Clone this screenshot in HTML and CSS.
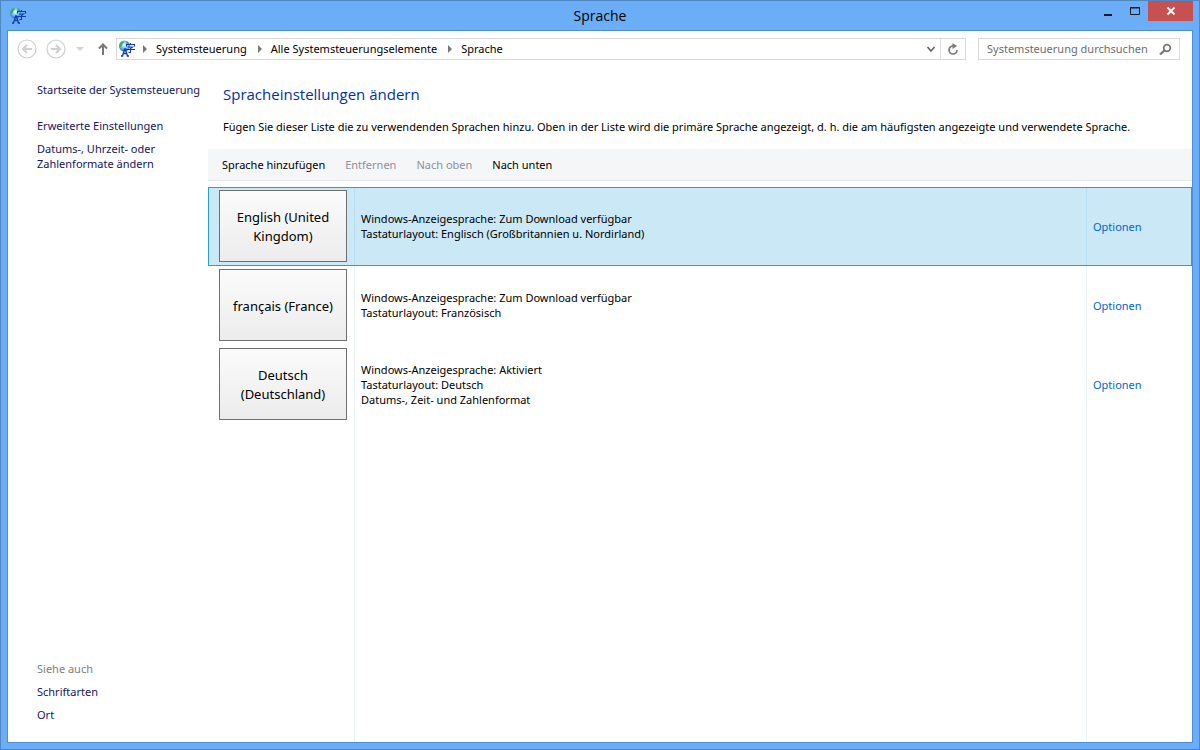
FILE: index.html
```
<!DOCTYPE html>
<html lang="de">
<head>
<meta charset="utf-8">
<title>Sprache</title>
<link rel="stylesheet" href="styles.css">
</head>
<body>
<svg class="defs" aria-hidden="true">
  <defs>
    <radialGradient id="globe" cx="0.5" cy="0.4" r="0.65">
      <stop offset="0" stop-color="#f2fdff"/>
      <stop offset="0.5" stop-color="#6cc6f0"/>
      <stop offset="1" stop-color="#1d5fc0"/>
    </radialGradient>
    <symbol id="lang" viewBox="0 0 18 18">
      <circle cx="6.500" cy="6" r="5.500" fill="url(#globe)"/>
      <path d="M1.500 4.500 3.500 1.800 5.500 1l.5 1.600-1.500 1-.8 2.400-1.700 1zM8.500 1l2.200 1.500.8 2-1.800.5-1.500-1.500z" fill="#3fae45"/>
      <path d="M4.500 16 6.700 9h.6L9.500 16M5.300 13.500h3.400M3 16h2.200M8.700 16h2.300" fill="none" stroke="#153ca8" stroke-width="1.300"/>
      <path d="M12.500 3v1.500M8.500 6.500V4.500h8v2M10 7h4.500l-2 1.500v4h-2M8 9.500h9" fill="none" stroke="#1738b5" stroke-width="1.100"/>
    </symbol>
  </defs>
</svg>
<div class="window">
  <header class="titlebar">
    <svg class="app-icon"><use href="#lang"/></svg>
    <h1 class="title">Sprache</h1>
    <div class="controls">
      <button class="control" aria-label="Minimieren"><svg width="12" height="12"><path d="M2 9h8v2H2z" fill="#1c1c1c"/></svg></button>
      <button class="control" aria-label="Maximieren"><svg width="12" height="12"><path d="M1.500 2.500h9v7h-9zM1 3h10" fill="none" stroke="#1c1c1c"/></svg></button>
      <button class="control close" aria-label="Schließen"><svg width="10" height="10"><path d="M1.500 1.500 8.500 8.500M8.500 1.500 1.500 8.500" stroke="#fff" stroke-width="1.800"/></svg></button>
    </div>
  </header>
  <div class="client">
    <nav class="navbar" aria-label="Navigation">
      <button class="nav" aria-label="Zurück" disabled><svg width="20" height="20" fill="none" stroke="#cfcfcf"><circle cx="10" cy="10" r="9" stroke-width="1.200"/><path d="M15 10H6M10 6l-4 4 4 4" stroke-width="2"/></svg></button>
      <button class="nav" aria-label="Vorwärts" disabled><svg width="20" height="20" fill="none" stroke="#cfcfcf"><circle cx="10" cy="10" r="9" stroke-width="1.200"/><path d="M5 10h9M10 6l4 4-4 4" stroke-width="2"/></svg></button>
      <button class="recent" aria-label="Verlauf" disabled><svg width="8" height="5"><path d="M0 0h8L4 4z" fill="#cfcfcf"/></svg></button>
      <button class="up" aria-label="Nach oben"><svg width="12" height="14"><path d="M6 13V3M2 6.500l4-4 4 4" fill="none" stroke="#777" stroke-width="2"/></svg></button>
      <div class="address">
        <svg class="app-icon"><use href="#lang"/></svg>
        <svg class="arrow" width="5" height="8"><path d="M0 0v8l4-4z" fill="#777"/></svg>
        <a class="crumb" href="#">Systemsteuerung</a>
        <svg class="arrow" width="5" height="8"><path d="M0 0v8l4-4z" fill="#777"/></svg>
        <a class="crumb" href="#">Alle Systemsteuerungselemente</a>
        <svg class="arrow" width="5" height="8"><path d="M0 0v8l4-4z" fill="#777"/></svg>
        <a class="crumb" href="#">Sprache</a>
        <button class="drop" aria-label="Vorherige Orte"><svg width="10" height="8"><path d="M1.500 2 5 6l3.500-4" fill="none" stroke="#666" stroke-width="1.700"/></svg></button>
        <button class="refresh" aria-label="Aktualisieren"><svg width="12" height="14"><path d="M6 4A4 4 0 1 0 10 8" fill="none" stroke="#777" stroke-width="1.700"/><path d="M5.500 1v6L10 4z" fill="#777"/></svg></button>
      </div>
      <label class="search">
        <input class="search-input" type="text" aria-label="Systemsteuerung durchsuchen" placeholder="Systemsteuerung durchsuchen">
        <svg width="13" height="13" fill="none" stroke="#777"><circle cx="8" cy="5" r="3.300" stroke-width="1.700"/><path d="M5.600 7.400 1 11.500" stroke-width="2.200"/></svg>
      </label>
    </nav>
    <div class="body">
      <aside class="sidebar">
        <a class="side-link home" href="#">Startseite der Systemsteuerung</a>
        <a class="side-link" href="#">Erweiterte Einstellungen</a>
        <a class="side-link" href="#">Datums-, Uhrzeit- oder<br>Zahlenformate ändern</a>
        <div class="see-also">
          <span class="see-title">Siehe auch</span>
          <a class="side-link" href="#">Schriftarten</a>
          <a class="side-link" href="#">Ort</a>
        </div>
      </aside>
      <main class="main">
        <h2 class="heading">Spracheinstellungen ändern</h2>
        <p class="intro">Fügen Sie dieser Liste die zu verwendenden Sprachen hinzu. Oben in der Liste wird die primäre Sprache angezeigt, d. h. die am häufigsten angezeigte und verwendete Sprache.</p>
        <div class="toolbar">
          <button class="command">Sprache hinzufügen</button>
          <button class="command" disabled>Entfernen</button>
          <button class="command" disabled>Nach oben</button>
          <button class="command">Nach unten</button>
        </div>
        <div class="list">
          <div class="row selected">
            <div class="tile-cell"><button class="tile">English (United Kingdom)</button></div>
            <div class="details">Windows-Anzeigesprache: Zum Download verfügbar<br>Tastaturlayout: Englisch (Großbritannien u. Nordirland)</div>
            <div class="action"><a class="options" href="#">Optionen</a></div>
          </div>
          <div class="row">
            <div class="tile-cell"><button class="tile">français (France)</button></div>
            <div class="details">Windows-Anzeigesprache: Zum Download verfügbar<br>Tastaturlayout: Französisch</div>
            <div class="action"><a class="options" href="#">Optionen</a></div>
          </div>
          <div class="row">
            <div class="tile-cell"><button class="tile">Deutsch (Deutschland)</button></div>
            <div class="details">Windows-Anzeigesprache: Aktiviert<br>Tastaturlayout: Deutsch<br>Datums-, Zeit- und Zahlenformat</div>
            <div class="action"><a class="options" href="#">Optionen</a></div>
          </div>
          <div class="row filler"><div></div><div class="details"></div><div class="action"></div></div>
        </div>
      </main>
    </div>
  </div>
</div>
</body>
</html>
```
FILE: styles.css
```
* { box-sizing: border-box; }
body {
  margin: 0;
  font: 11px/15px "Noto Sans", "Open Sans", sans-serif;
  color: #000;
}
button, input { font: inherit; color: inherit; }
button { border: 0; padding: 0; background: none; }
a { color: inherit; text-decoration: none; }
svg { display: block; flex: none; }
.defs { position: absolute; width: 0; height: 0; }

.window {
  display: flex;
  flex-direction: column;
  min-height: 100vh;
  padding: 0 7px 7px;
  background: #6badf6;
  border: 1px solid #4f86c4;
}
.titlebar {
  display: grid;
  grid-template-columns: 1fr auto 1fr;
  height: 29px;
}
.app-icon { width: 18px; height: 18px; }
.titlebar .app-icon { margin: 6px 1px; }
.title { margin: 0; padding-top: 5px; font-family: "Open Sans", sans-serif; font-size: 14px; line-height: 20px; font-weight: 400; }
.controls { display: flex; justify-content: flex-end; align-items: flex-start; margin-right: -1px; }
.control { display: flex; align-items: center; justify-content: center; width: 27px; height: 20px; }
.close { width: 45px; background: #c75050; }

.client {
  flex: 1;
  display: flex;
  flex-direction: column;
  margin: 0 -1px -1px;
  border: 1px solid #4f8fd8;
  background: #fff;
}
.navbar { display: flex; align-items: center; padding: 7px 12px 0 9px; }
.nav { margin-right: 9px; }
.recent { margin: 0 13px 0 1px; }
.up { margin-right: 7px; }
.address {
  flex: 1;
  display: flex;
  align-items: center;
  height: 22px;
  padding-left: 1px;
  border: 1px solid #d9d9d9;
}
.arrow { margin: 0 8px 0 7px; }
.crumb { margin-right: 4px; padding-bottom: 1px; }
.drop { margin-left: auto; padding: 0 4px; }
.refresh { display: flex; align-items: center; justify-content: center; width: 25px; height: 20px; border-left: 1px solid #d9d9d9; }
.search {
  display: flex;
  align-items: center;
  width: 202px;
  height: 22px;
  margin-left: 12px;
  padding: 0 7px 0 8px;
  border: 1px solid #d9d9d9;
}
.search-input { flex: 1; min-width: 0; border: 0; padding: 0 0 1px; outline: 0; background: none; }
.search-input::placeholder { color: #6d6d6d; opacity: 1; }

.body { flex: 1; display: flex; }
.sidebar {
  flex: none;
  display: flex;
  flex-direction: column;
  gap: 8px;
  width: 200px;
  padding: 22px 0 20px 29px;
  color: #151560;
  white-space: nowrap;
}
.home { margin-bottom: 13px; }
.see-also { display: flex; flex-direction: column; gap: 8px; margin-top: auto; }
.see-title { color: #808080; }

.main { flex: 1; min-width: 0; display: flex; flex-direction: column; }
.heading { margin: 0; padding: 24px 15px 0; font-family: "Open Sans", sans-serif; font-size: 15px; line-height: 20px; font-weight: 400; color: #003399; }
.intro { margin: 0; padding: 15px 15px; }
.toolbar { display: flex; gap: 20px; height: 32px; padding-left: 14px; background: #f5f6f7; border-bottom: 1px solid #e6e7e8; }
.command:disabled { color: #8f8f9f; }
.list { flex: 1; display: flex; flex-direction: column; margin-top: 6px; }
.row { display: grid; grid-template-columns: 145px 1fr 105px; min-height: 79px; border: 1px solid transparent; }
.row.selected { background: #cbe8f6; border-color: #26a0da; }
.filler { flex: 1; }
.row:not(.selected) { border-width: 0 1px; }
.tile-cell { display: flex; align-items: center; justify-content: center; padding: 0 7px 1px 10px; }
.tile {
  width: 128px;
  height: 72px;
  padding: 2px 12px 0;
  border: 1px solid #707070;
  background: linear-gradient(#fbfbfb, #ececec);
  font-size: 13px;
  line-height: 19px;
}
.details, .action { display: flex; align-items: center; padding-left: 6px; border-left: 1px solid #e9f3fb; }
.details { padding-bottom: 1px; }
.selected .details, .selected .action { border-left-color: #b9def5; }
.options { color: #0066cc; }
```
